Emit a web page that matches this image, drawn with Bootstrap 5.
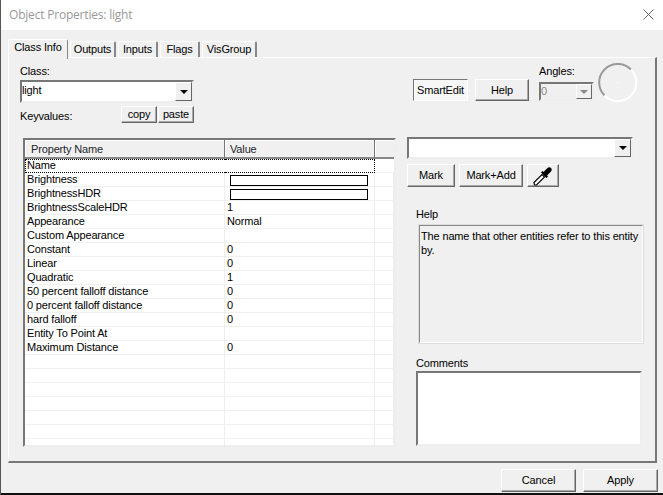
<!DOCTYPE html>
<html lang="en"><head><meta charset="utf-8"><title>Object Properties</title>
<link rel="stylesheet" href="https://cdn.jsdelivr.net/npm/bootstrap@5.3.0/dist/css/bootstrap.min.css">
<style>
html,body{margin:0;height:495px;overflow:hidden;background:#f0f0f0}
body{font:11px/14px "Liberation Sans",Arial,sans-serif;letter-spacing:-.15px;color:#000}
.dlg{width:663px;height:495px;border-left:1px solid #555;display:flex;flex-direction:column;background:#f0f0f0;overflow:hidden}
.ttl{height:30px;flex:none;background:#fff;color:#999;font:12px/30px "Open Sans",sans-serif;letter-spacing:-.2px;padding-left:8px;display:flex;justify-content:space-between}
.ttl svg{margin:9px 9px 0 0}
.tabrow{height:27px;flex:none;padding:8px 0 0 7px}
.tabrow .nav-tabs{border:0;gap:2px;flex-wrap:nowrap;align-items:flex-end}
.tabrow .nav-link{padding:0;height:17px;line-height:15px;font-size:11px;color:#000;background:#f0f0f0;border:1px solid #fff;border-right:2px solid #888;border-bottom:0;border-radius:2px 2px 0 0;margin:0;text-align:center}
.tabrow .nav-link.active{height:20px;line-height:15px;color:#000;background:#f0f0f0;border-color:#fff #aaa #f0f0f0 #fff;border-right:1px solid #888;position:relative;top:1px}
.t1{width:60px}.t2{width:46px}.t3{width:40px}.t4{width:40px}.t5{width:55px}
.pane{width:649px;height:406px;margin-left:7px;flex:none;border:1px solid #fff;border-right:2px solid #777;border-bottom:2px solid #777;display:flex}
.lft{width:398px;flex:none;padding:6px 0 0 11px}
.rgt{flex:1;padding:6px 0 0 0;position:relative}
.cmb{display:flex;background:#fff;border:2px solid;border-color:#777 #eee #eee #777;line-height:17px}
.cmb>span{flex:1}
.cmb>i{width:17px;flex:none;border:1px solid;border-color:#fff #666 #666 #fff;background:#f0f0f0;display:flex;align-items:center;justify-content:center}
.cmb>i::before{content:"";border:4px solid transparent;border-top:4px solid #000;border-bottom:0}
.cmb.off{background:#f0f0f0;color:#888}
.cmb.off>i::before{border-top-color:#888}
.wbtn.btn{--bs-btn-padding-x:0;--bs-btn-padding-y:0;font-size:11px;letter-spacing:-.15px;line-height:1;border-radius:0;background:#f0f0f0;color:#000;border:1px solid;border-color:#fff #666 #666 #fff;display:flex;align-items:center;justify-content:center;flex:none;box-shadow:inset -1px -1px 0 #aaa}
.combo1{width:174px;height:23px;margin:2px 0 0 0}
.kvrow{display:flex;align-items:flex-start;margin:3px 0 0 0;width:174px}
.kvrow .lb{width:101px;padding-top:3px}
.w36{width:36px;height:17px}
.grid{width:373px;height:309px;margin:15px 0 0 3px;border-left:2px solid #777;border-top:2px solid #777;border-right:2px solid #eee;border-bottom:2px solid #eee;background:#fff;display:block;overflow:hidden}
.grid table{width:369px;table-layout:fixed;margin:0;border-collapse:separate;border-spacing:0;font-size:11px;--bs-table-bg:transparent}
.grid th{height:19px;padding:1px 0 0 5px;font-weight:400;background:#f0f0f0;border:0;border-right:1px solid #777;border-bottom:2px solid #888;line-height:15px;box-shadow:inset 1px 1px 0 #fff}
.grid th:first-child{padding-left:6px}
.grid th:last-child{border-right:0}
.grid td{height:14px;padding:0 0 0 2px;line-height:13px;border:0;border-right:1px solid #eee;border-bottom:1px solid #f0f0f0;white-space:nowrap;overflow:hidden;vertical-align:top;color:#000}
.grid tr.foc td{line-height:10px;border-top:1px dotted #000;border-bottom:1px dotted #000;border-right:0}
.grid tr.foc td:first-child{border-left:1px dotted #000;padding-left:1px}
.grid tr.foc td:nth-child(2){border-right:1px dotted #000}
.grid tr.foc td:last-child{border:0;border-bottom:1px solid #f0f0f0}
.cbar{display:block;height:11px;width:138px;margin:2px 0 0 3px;border:1px solid #000;background:#fff}
.tophead{display:flex;height:59px}
.smart{width:55px;height:22px;margin:15px 0 0 6px;border-color:#777 #fff #fff #777!important;box-shadow:none!important;background:#f7f7f7!important}
.hlp{width:54px;height:22px;margin:15px 0 0 7px}
.angbox{margin-left:10px;width:60px}
.combo2{width:55px;height:19px;margin-top:4px;line-height:14px}
.combo2>i{width:16px}
.dial{width:40px;height:40px;margin:-1px 0 0 -1px;flex:none}
.combo3{width:226px;height:22px;margin-top:14px}
.btnrow{display:flex;gap:4px;margin-top:5px}
.m1{width:48px;height:23px}.m2{width:64px;height:23px}.m3{width:32px;height:23px}
.hlab{margin:20px 0 0 9px;line-height:14px}
.hbox{width:226px;height:120px;margin:3px 0 0 11px;padding:3px 1px;border:2px solid;border-color:#888 #fff #fff #888;background:#f0f0f0;line-height:14px;outline:1px solid #ddd;outline-offset:-1px}
.clab{margin:12px 0 0 9px}
.cbox{width:226px;height:75px;margin:1px 0 0 9px;border:2px solid;border-color:#777 #eee #eee #777;background:#fff}
.foot{display:flex;justify-content:flex-end;gap:7px;margin-top:6px;padding-right:5px}
.foot .wbtn{width:75px;height:23px}
.strip{height:2px;margin-top:auto;background:#111;flex:none}
</style></head><body>
<div class="dlg">
  <div class="ttl"><span>Object Properties: light</span><svg width="11" height="11" viewBox="0 0 11 11"><path d="M.5 .5l10 10M10.500 .5l-10 10" stroke="#666" fill="none"/></svg></div>
  <div class="tabrow"><ul class="nav nav-tabs">
    <li class="nav-item"><a class="nav-link active t1" href="#">Class Info</a></li>
    <li class="nav-item"><a class="nav-link t2" href="#">Outputs</a></li>
    <li class="nav-item"><a class="nav-link t3" href="#">Inputs</a></li>
    <li class="nav-item"><a class="nav-link t4" href="#">Flags</a></li>
    <li class="nav-item"><a class="nav-link t5" href="#">VisGroup</a></li>
  </ul></div>
  <div class="pane">
    <div class="lft">
      <div>Class:</div>
      <div class="cmb combo1"><span>light</span><i></i></div>
      <div class="kvrow"><span class="lb">Keyvalues:</span><button class="btn wbtn w36">copy</button><button class="btn wbtn w36 ms-auto">paste</button></div>
      <div class="grid"><table class="table"><thead><tr><th style="width:200px">Property Name</th><th style="width:150px">Value</th><th></th></tr></thead><tbody>
        <tr class="foc"><td>Name</td><td></td><td></td></tr>
        <tr><td>Brightness</td><td><span class="cbar"></span></td><td></td></tr>
        <tr><td>BrightnessHDR</td><td><span class="cbar"></span></td><td></td></tr>
        <tr><td>BrightnessScaleHDR</td><td>1</td><td></td></tr>
        <tr><td>Appearance</td><td>Normal</td><td></td></tr>
        <tr><td>Custom Appearance</td><td></td><td></td></tr>
        <tr><td>Constant</td><td>0</td><td></td></tr>
        <tr><td>Linear</td><td>0</td><td></td></tr>
        <tr><td>Quadratic</td><td>1</td><td></td></tr>
        <tr><td>50 percent falloff distance</td><td>0</td><td></td></tr>
        <tr><td>0 percent falloff distance</td><td>0</td><td></td></tr>
        <tr><td>hard falloff</td><td>0</td><td></td></tr>
        <tr><td>Entity To Point At</td><td></td><td></td></tr>
        <tr><td>Maximum Distance</td><td>0</td><td></td></tr>
        <tr><td></td><td></td><td></td></tr><tr><td></td><td></td><td></td></tr><tr><td></td><td></td><td></td></tr><tr><td></td><td></td><td></td></tr><tr><td></td><td></td><td></td></tr><tr><td></td><td></td><td></td></tr><tr><td></td><td></td><td></td></tr>
      </tbody></table></div>
    </div>
    <div class="rgt">
      <div class="tophead">
        <button class="btn wbtn smart">SmartEdit</button>
        <button class="btn wbtn hlp">Help</button>
        <div class="angbox"><div>Angles:</div><div class="cmb off combo2"><span>0</span><i></i></div></div>
        <svg class="dial" viewBox="0 0 40 40"><path d="M6.500 32.500A18.500 18.500 0 0 1 33 6.500" fill="none" stroke="#999" stroke-width="2"/><path d="M33 6.500A18.500 18.500 0 0 1 6.500 32.500" fill="none" stroke="#fff" stroke-width="2"/><rect x="19" y="19" width="1" height="1" fill="#fff"/></svg>
      </div>
      <div class="cmb combo3"><span></span><i></i></div>
      <div class="btnrow">
        <button class="btn wbtn m1">Mark</button><button class="btn wbtn m2">Mark+Add</button>
        <button class="btn wbtn m3" aria-label="Pick"><svg width="20" height="20" viewBox="0 0 20 20"><path d="M1.500 19l-.5-2.500L9 8.500l2.500 2.500-8 8z" fill="#fff" stroke="#000" stroke-width="1.200"/><path d="M8 6.500L13.500 12l1.500-1.500-1-1 3.500-3.500c1.500-1.500 1.500-3 .5-4s-2.500-1-4 .5L10.500 6l-1-1z" fill="#000"/></svg></button>
      </div>
      <div class="hlab">Help</div>
      <div class="hbox">The name that other entities refer to this entity by.</div>
      <div class="clab">Comments</div>
      <div class="cbox"></div>
    </div>
  </div>
  <div class="foot"><button class="btn wbtn">Cancel</button><button class="btn wbtn">Apply</button></div>
  <div class="strip"></div>
</div>
</body></html>
